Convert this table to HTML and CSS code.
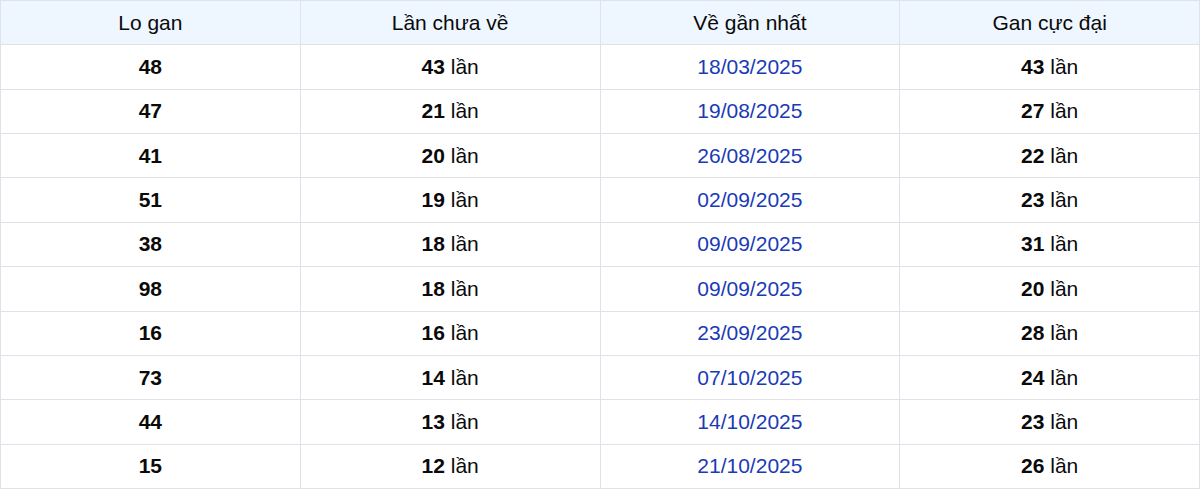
FILE: index.html
```html
<!DOCTYPE html>
<html lang="vi">
<head>
<meta charset="utf-8">
<title>Lo gan</title>
<link rel="stylesheet" href="styles.css">
</head>
<body>
<table class="gan">
  <thead>
    <tr><th>Lo gan</th><th>Lần chưa về</th><th>Về gần nhất</th><th>Gan cực đại</th></tr>
  </thead>
  <tbody>
    <tr><td><b>48</b></td><td><b>43</b> lần</td><td class="date">18/03/2025</td><td><b>43</b> lần</td></tr>
    <tr><td><b>47</b></td><td><b>21</b> lần</td><td class="date">19/08/2025</td><td><b>27</b> lần</td></tr>
    <tr><td><b>41</b></td><td><b>20</b> lần</td><td class="date">26/08/2025</td><td><b>22</b> lần</td></tr>
    <tr><td><b>51</b></td><td><b>19</b> lần</td><td class="date">02/09/2025</td><td><b>23</b> lần</td></tr>
    <tr><td><b>38</b></td><td><b>18</b> lần</td><td class="date">09/09/2025</td><td><b>31</b> lần</td></tr>
    <tr><td><b>98</b></td><td><b>18</b> lần</td><td class="date">09/09/2025</td><td><b>20</b> lần</td></tr>
    <tr><td><b>16</b></td><td><b>16</b> lần</td><td class="date">23/09/2025</td><td><b>28</b> lần</td></tr>
    <tr><td><b>73</b></td><td><b>14</b> lần</td><td class="date">07/10/2025</td><td><b>24</b> lần</td></tr>
    <tr><td><b>44</b></td><td><b>13</b> lần</td><td class="date">14/10/2025</td><td><b>23</b> lần</td></tr>
    <tr><td><b>15</b></td><td><b>12</b> lần</td><td class="date">21/10/2025</td><td><b>26</b> lần</td></tr>
  </tbody>
</table>
</body>
</html>
```
FILE: styles.css
```css
html, body {
  margin: 0;
  padding: 0;
  background: #ffffff;
}
body {
  font-family: "Liberation Sans", Arial, sans-serif;
  font-size: 21px;
  color: #0a0a0a;
}
.gan {
  width: 1200px;
  border-collapse: collapse;
  table-layout: fixed;
}
.gan th, .gan td {
  border: 1px solid #dfe2e8;
  text-align: center;
  padding: 0;
  height: 44.36px;
  box-sizing: border-box;
}
.gan th {
  background: #eef6ff;
  font-weight: normal;
  color: #0a0a0a;
}
.gan td b {
  font-weight: bold;
}
.gan td.date {
  color: #1a3bb5;
}
```
